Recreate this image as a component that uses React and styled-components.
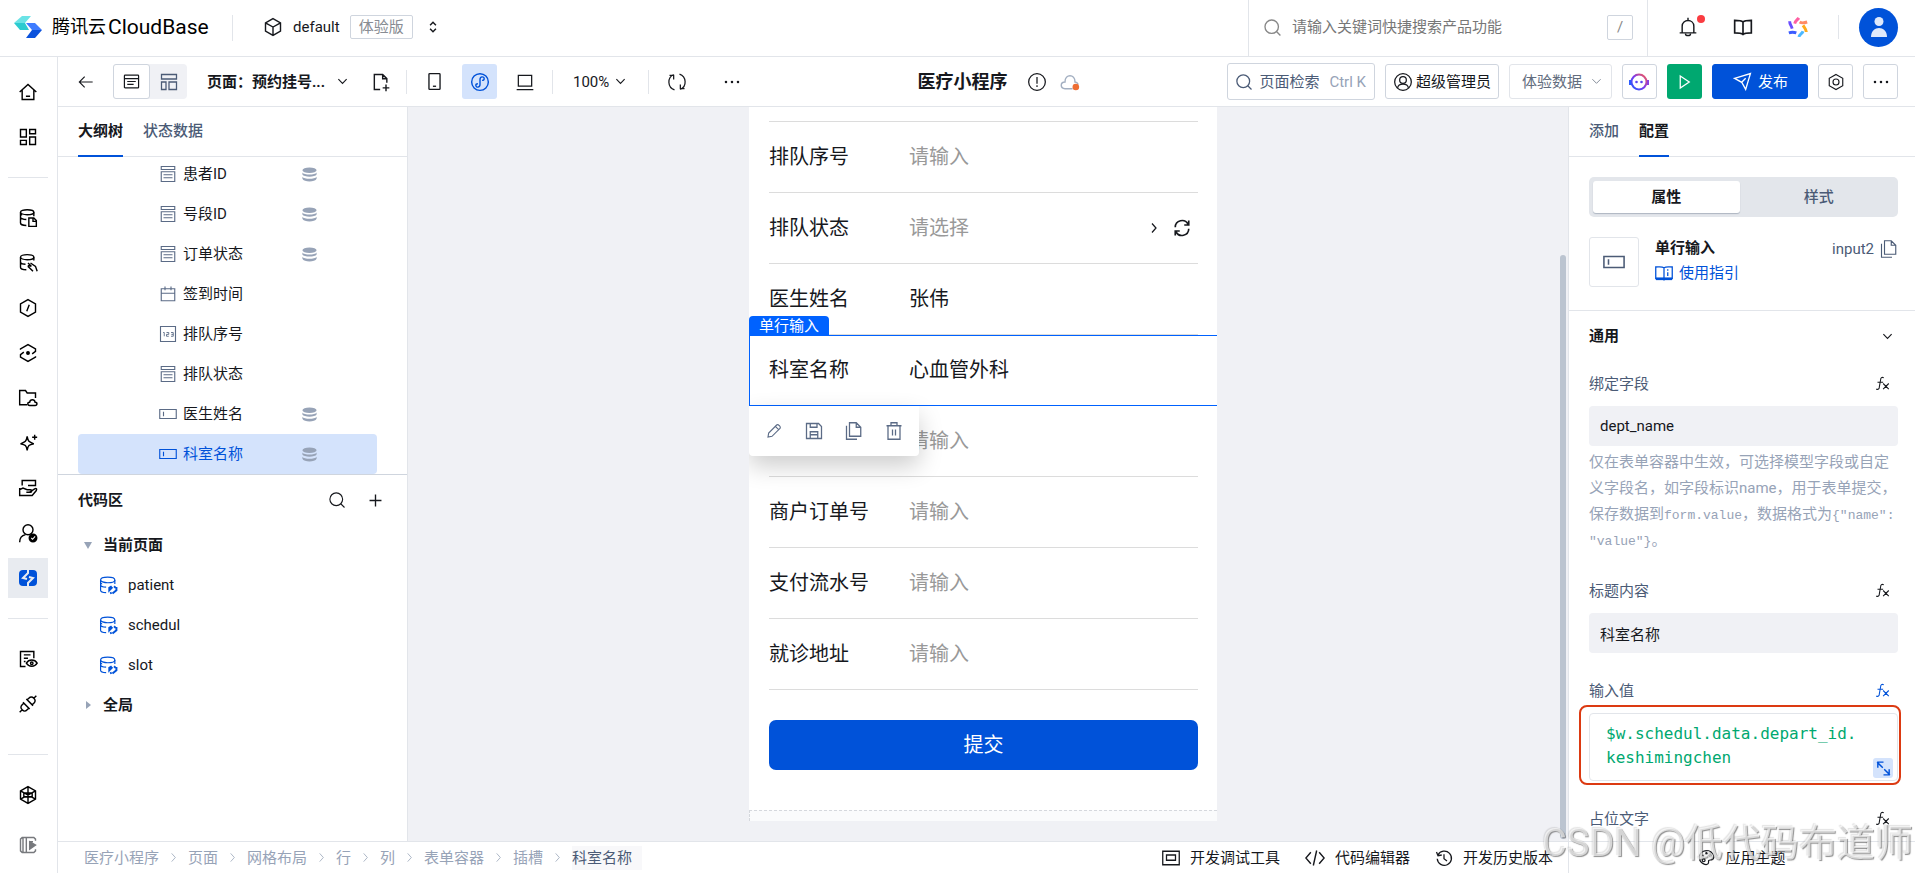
import React from "react"
import styled, { createGlobalStyle, css } from "styled-components";

const variables = {
    colorPrimary: "#0052d9",
    colorSelect: "#0062ff",
    colorPrimaryLight: "#d4e3fc",
    colorGreen: "#00a870",
    colorRed: "#dc3a12",
    colorText: "#16181d",
    colorMuted: "#4b5b76",
    colorFaint: "#97a3b7",
    colorBorder: "#e2e5ea",
    colorButtonBorder: "#cfd5de",
    colorCanvas: "#f0f1f5",
    colorWhite: "#ffffff",
    fontBase: 'Roboto, "Noto Sans CJK SC", sans-serif',
    fontCode: '"DejaVu Sans Mono", "Noto Sans CJK SC", monospace',
}

const GlobalStyle = createGlobalStyle`
    * {
        box-sizing: border-box;
    }
    body {
        margin: 0;
        font-family: ${variables.fontBase};
        font-size: 15px;
        line-height: 20px;
        color: ${variables.colorText};
        background-color: ${variables.colorWhite};
    }
    button, input, select, textarea {
        margin: 0;
        padding: 0;
        border: 0;
        outline: 0;
        font: inherit;
        color: inherit;
        background: none;
    }
    select {
        appearance: none;
    }
    ul {
        list-style: none;
        margin: 0;
        padding: 0;
    }
    h1, h2, h3, p {
        margin: 0;
        font-size: inherit;
    }
    a {
        color: inherit;
        text-decoration: none;
    }
    svg {
        display: block;
        flex: none;
    }
`

/* ---------- icons ---------- */

const Svg = styled.svg`
    width: ${props => props.$size}px;
    height: ${props => props.$size}px;
    fill: none;
    stroke: currentColor;
    stroke-width: ${props => props.$weight};
`

const icons = {
    home: <><path d="M2 12 12 3l10 9M5 10v11h14V10M9.500 17h5" /></>,
    grid: <><path d="M3 3h7v9H3zM14 3h7v5h-7zM14 12h7v9h-7zM3 16h7v5H3z" /></>,
    dbDoc: <><ellipse cx="11" cy="5" rx="8" ry="3" /><path d="M3 5v13c0 1.500 3 3 7 3M19 5v5M3 11.500c1 1.500 3 2 7 2.300M3 8h2M13 12h6l3 3v7h-9zM18 12v4h4" /></>,
    dbHand: <><ellipse cx="11" cy="5" rx="8" ry="3" /><path d="M3 5v12c0 2 3 3 7 3M19 5v4M3 11.500c1 1.500 3 2 6 2M12 12l4 4-3-1c-1 0-1 2 0 2l5 5M15 12l6 4 2 6" /></>,
    hexSlash: <><path d="M12 2l9 5v10l-9 5-9-5V7zM13.500 8l-3 8" /></>,
    hexDot: <><path d="M3 8V7l9-5 9 5v3l-4 3M21 16v1l-9 5-9-5v-3l4-3" /><circle cx="12" cy="12" r="1.500" fill="currentColor" /></>,
    folderCloud: <><path d="M11 20H2V3h7l2 3h10v6" /><path d="M14 21c-3 0-3-4 0-4 .5-4 6-4 6.500 0 3 0 3 4 0 4z" /></>,
    sparkle: <><path d="M11 4c1 6 2 7 8 9-6 1-7 2-8 8-1-6-2-7-8-8 6-2 7-3 8-9zM20 2v6M17 5h6" /></>,
    handBox: <><path d="M5 9V3h16v6h-9M2 14l4-2 5 2h4c2 0 2 3 0 3h-5M14 17l6-4c2-1 3 0 2 2l-5 6H2v-9" /></>,
    userCheck: <><circle cx="12" cy="8" r="6" /><path d="M2 23c0-5 3-8 7-9" /><circle cx="18" cy="18" r="4.500" fill="currentColor" /><path d="M16 18l1.500 1.500L20.500 16" stroke="#fff" strokeWidth="1.300" /></>,
    docEye: <><path d="M9 21H3V3h16v8M7 7h8M7 11h5M7 15h2" /><path d="M10 17c3-5 10-5 13 0-3 5-10 5-13 0z" /><circle cx="16.500" cy="17" r="1.500" /></>,
    plug: <><path d="M2 22l3-3M22 2l-3 3M5 13c-2 2-2 4 0 6s4 2 6 0l2-2-6-6zM13 5c2-2 4-2 6 0s2 4 0 6l-2 2-6-6zM6 10l8 8M10 6l8 8" /></>,
    hexWeb: <><path d="M12 2l9 5v10l-9 5-9-5V7zM12 2v20M3 7l18 10M21 7L3 17M7 9.500h10v5H7z" /></>,
    expand: <><path d="M21 7V5l-2-2H5L3 5v14l2 2h14l2-2v-2M10 3v18M6 3v18M14 8h4" /><path d="M14 8v9l7-5z" fill="currentColor" /></>,
    cube: <><path d="M12 2l9 5v10l-9 5-9-5V7zM3 7l9 5 9-5M12 12v10" /></>,
    updown: <><path d="M7 9l5-5 5 5M7 15l5 5 5-5" /></>,
    search: <><circle cx="11" cy="11" r="8.500" /><path d="M17 17l5 5" /></>,
    bell: <><path d="M2 19h20M5 19v-8c0-9 14-9 14 0v8M12 4V1M9 20c0 3 6 3 6 0" /></>,
    book: <><path d="M12 6C10 4 6 4 2 4v15c4 0 8 0 10 2 2-2 6-2 10-2V4c-4 0-8 0-10 2zM12 6v15" /></>,
    back: <><path d="M22 12H2M10 4l-8 8 8 8" /></>,
    page: <><rect x="2" y="3" width="20" height="18" rx="1" /><path d="M2 8h20M6 12h12M6 16h9" /></>,
    layout: <><path d="M2 2h20v6H2zM2 12h6v10H2zM12 12h10v10H12z" /></>,
    chevron: <><path d="M3 7l9 9 9-9" /></>,
    chevronRight: <><path d="M8 3l8 9-8 9" /></>,
    docPlus: <><path d="M11 21H4V3h10l5 5v5M14 3v5h5M18 23v-8M14 19h8" /></>,
    phone: <><rect x="5" y="2" width="14" height="20" rx="1" /><path d="M10 18h4" /></>,
    mini: <><circle cx="12" cy="12" r="10" /><path d="M12 9v6c0 4-5 4-5 1 0-1 1-2 2.500-2M12 15V9c0-4 5-4 5-1 0 1-1 2-2.500 2" /></>,
    laptop: <><path d="M4 4h16v13H4zM2 21h20" /></>,
    refresh: <><path d="M8 3a10 10 0 0 0 1 18.500M16 21A10 10 0 0 0 15 2.500M3 4h5v5M21 20h-5v-5" /></>,
    sync: <><path d="M3 11a9 9 0 0 1 17-4M21 13a9 9 0 0 1-17 4M21 2v6h-6M3 22v-6h6" /></>,
    dots: <g fill="currentColor" stroke="none"><circle cx="4" cy="12" r="1.700" /><circle cx="12" cy="12" r="1.700" /><circle cx="20" cy="12" r="1.700" /></g>,
    info: <><circle cx="12" cy="12" r="10" /><path d="M12 6v8M12 16v2" /></>,
    cloud: <><path d="M6 20c-6 0-6-8 0-8 0-10 12-10 12 0 2 0 3 1 4 3M6 20h9" /><circle cx="19" cy="18" r="4" fill="#ed6d33" stroke="none" /></>,
    user: <><circle cx="12" cy="12" r="10" /><circle cx="12" cy="9.500" r="4" /><path d="M5.500 19c1-6 12-6 13 0" /></>,
    play: <><path d="M7 4l12 8-12 8z" /></>,
    send: <><path d="M2 8l20-6-6 20-5-9zM11 13l5-5" /></>,
    gear: <><path d="M12 2l9 5v10l-9 5-9-5V7z" /><circle cx="12" cy="12" r="4" /></>,
    select: <><path d="M3 2h18v4H3zM3 9h18v13H3zM6 13h12M6 17h12" /></>,
    calendar: <><path d="M3 5h18v16H3zM3 11h18M8 2v5M16 2v5" /></>,
    number: <><path d="M2 2h20v20H2z" /><path d="M5.500 10H7v5M10 10h3v2.500h-3V15h3M16 10h3v5h-3M16.500 12.500H19" strokeWidth="1.200" /></>,
    field: <><path d="M1 6h22v12H1zM6 9v6" /></>,
    db: <g fill="currentColor" stroke="none"><ellipse cx="12" cy="6" rx="10" ry="4" /><path d="M2 9c2 4 18 4 20 0v3c-2 4-18 4-20 0zM2 15c2 4 18 4 20 0v3c-2 5-18 5-20 0z" /></g>,
    dbModel: <><ellipse cx="11" cy="5" rx="9" ry="3.500" /><path d="M2 5v13c0 2 3 3 7 3M20 5v5M2 11c0 2 3 3 7 3M2 8c0 1 1 2 2 2" /><path d="M16 13l-3 2v3l4-4M22 14v4l-5 4M19 13l2 2M14 22l2-1" strokeWidth="2.500" /></>,
    plus: <><path d="M12 1v22M1 12h22" /></>,
    pencil: <><path d="M3 21l1-6L16 3c2-2 7 3 5 5L9 20zM14 5l5 5" /></>,
    save: <><path d="M2 2h16l4 4v16H2zM7 2v5h9V2M7 22v-9h10v9M7 17h10" /></>,
    copy: <><path d="M6 1h9l6 6v12H6zM15 1v6h6M2 5v18h14" /></>,
    trash: <><path d="M2 5h20M4 5v18h16V5M8 5V1h8v4M10 10v8M14 10v8" /></>,
    guide: <><path d="M12 5C9 3 5 4 1 4v15h22V4c-4 0-8-1-11 1zM12 5v17M17 11v5M17 7v2" /><path d="M1 20h22" strokeWidth="3" /></>,
    fx: <><path d="M14 3c-3-2-5 0-5 3L7 17c0 4-2 5-5 4M4 10h9M13 12l9 9M22 12l-9 9" /></>,
    full: <><path d="M4 11V3h8M3 3l8 8M20 13v8h-8M21 21l-8-8" /></>,
    debug: <><path d="M1 3h22v18H1z" /><path d="M6 8h12v7H6z" /></>,
    code: <><path d="M7 5l-6 7 6 7M17 5l6 7-6 7M14 3l-4 18" /></>,
    history: <><path d="M4 8a9.500 9.500 0 1 1-1 5M2 4l2 5 5-1M12 7v6l4 3" /></>,
    palette: <><path d="M14 21c-2 2-12 0-12-9S12 0 18 4s5 10 2 11-6 0-5 3c0 1 0 2-1 3z" /><circle cx="7" cy="10" r="1" /><circle cx="12" cy="6" r="1" /><circle cx="17" cy="9" r="1" /><circle cx="8" cy="16" r="2" /></>,
}

const Icon = ({ name, size = 20, weight = 1.7 }) => (
    <Svg viewBox="0 0 24 24" $size={size} $weight={weight} aria-hidden="true">{icons[name]}</Svg>
)

const Logo = () => (
    <svg width="28" height="22" viewBox="0 0 28 22" aria-hidden="true">
        <path d="M0 7L8 0h9l-6 7z" fill="#6be3e6" />
        <path d="M0 7h11l4 7H6z" fill="#2ccbd0" />
        <path d="M12 7h9l7 7H18z" fill="#3f7cff" />
        <path d="M18 14h10l-7 8h-9z" fill="#0b52dc" />
    </svg>
)

const Pinwheel = () => (
    <svg width="20" height="20" viewBox="0 0 24 24" fill="none" strokeWidth="3.500" aria-hidden="true">
        <path d="M8 8c1-4 3-4 5-7" stroke="#ff5fa2" />
        <path d="M14 6c3 2 6 1 9 0" stroke="#ff8a65" />
        <path d="M18 10c2 3 4 5 4 8" stroke="#ffab1a" />
        <path d="M18 17c-1 3-4 4-5 7" stroke="#4cb8ff" />
        <path d="M10 19c-3-1-6-1-9 0" stroke="#3b5bff" />
        <path d="M5 14C4 10 2 9 2 5" stroke="#6a4dff" />
    </svg>
)

const Bot = () => (
    <svg width="20" height="18" viewBox="0 0 20 18" fill="none" aria-hidden="true">
        <defs>
            <linearGradient id="bot" x1="1" y1="0" x2="0" y2="1">
                <stop offset="0" stopColor="#ff5a4d" />
                <stop offset="0.5" stopColor="#7c3aed" />
                <stop offset="1" stopColor="#1f5bff" />
            </linearGradient>
        </defs>
        <circle cx="10" cy="9" r="7.500" stroke="url(#bot)" strokeWidth="2" />
        <path d="M1 7v5" stroke="#2b5cff" strokeWidth="2" />
        <path d="M19 7v5" stroke="#8a3fe0" strokeWidth="2" />
        <circle cx="7.500" cy="9" r="1.300" fill="#5b45f0" />
        <circle cx="12.500" cy="9" r="1.300" fill="#5b45f0" />
    </svg>
)

/* ---------- page frame ---------- */

const Page = styled.div`
    display: flex;
    flex-direction: column;
    height: 100vh;
    overflow: hidden;
`

const Header = styled.header`
    display: flex;
    align-items: center;
    flex: none;
    height: 57px;
    border-bottom: 1px solid ${variables.colorBorder};
`

const Brand = styled.a`
    display: flex;
    align-items: center;
    width: 218px;
    margin-left: 14px;
    padding-bottom: 2px;
    font-size: 18px;
    color: #000;
    & > svg {
        margin-right: 10px;
    }
    & > span {
        font-size: 21px;
        margin-left: 2px;
    }
`

const Divider = styled.span`
    width: 1px;
    height: ${props => props.$height || 24}px;
    background-color: ${variables.colorBorder};
    flex: none;
`

const EnvButton = styled.button`
    display: flex;
    align-items: center;
    gap: 10px;
    padding: 0 0 2px 30px;
    & > svg:last-child {
        margin-left: 3px;
    }
`

const EnvTag = styled.span`
    padding: 1px 8px;
    border: 1px solid ${variables.colorButtonBorder};
    border-radius: 2px;
    color: #888c93;
`

const GlobalSearch = styled.label`
    display: flex;
    align-items: center;
    width: 400px;
    height: 100%;
    margin-left: auto;
    padding: 0 14px 2px;
    border: solid ${variables.colorBorder};
    border-width: 0 1px;
    color: #888;
    & input {
        flex: 1;
        min-width: 0;
        margin-left: 10px;
        &::placeholder {
            color: #777;
        }
    }
`

const KeyHint = styled.kbd`
    width: 26px;
    border: 1px solid ${variables.colorButtonBorder};
    border-radius: 2px;
    line-height: 23px;
    font-family: inherit;
    text-align: center;
`

const HeaderTools = styled.div`
    display: flex;
    align-items: center;
    padding: 0 17px 2px 20px;
    gap: 15px;
    & > ${Divider} {
        margin: 0 5px;
    }
`

const ToolButton = styled.button`
    position: relative;
    display: flex;
    justify-content: center;
    align-items: center;
    width: 40px;
    height: 40px;
`

const AlertDot = styled.i`
    position: absolute;
    top: 8px;
    right: 3px;
    width: 8px;
    height: 8px;
    border-radius: 50%;
    background-color: #fa3c41;
`

const Avatar = styled.button`
    display: flex;
    justify-content: center;
    align-items: center;
    width: 39px;
    height: 39px;
    border-radius: 50%;
    background-color: ${variables.colorPrimary};
`

const Shell = styled.div`
    display: flex;
    flex: 1;
    min-height: 0;
`

const Sidebar = styled.nav`
    display: flex;
    flex-direction: column;
    gap: 5px;
    flex: none;
    width: 58px;
    padding: 15px 9px 0 8px;
    border-right: 1px solid ${variables.colorBorder};
    & > hr {
        width: 40px;
        height: 1px;
        margin: 15px 0;
        border: 0;
        background-color: ${variables.colorBorder};
    }
    & > hr:last-of-type {
        margin-top: 25px;
    }
`

const NavLink = styled.a`
    display: flex;
    justify-content: center;
    align-items: center;
    flex: none;
    width: 40px;
    height: 40px;
    margin-top: ${props => props.$dim ? 5 : 0}px;
    color: ${props => props.$dim ? "#77797d" : "#000"};
    background-color: ${props => props.$active ? "#e8ebf0" : "transparent"};
`

const Main = styled.main`
    display: flex;
    flex-direction: column;
    flex: 1;
    min-width: 0;
`

/* ---------- toolbar ---------- */

const Toolbar = styled.div`
    display: grid;
    grid-template-columns: 1fr auto 1fr;
    align-items: center;
    flex: none;
    height: 50px;
    border-bottom: 1px solid ${variables.colorBorder};
`

const ToolGroup = styled.div`
    display: flex;
    align-items: center;
    gap: 10px;
    padding-left: 10px;
`

const ActionGroup = styled(ToolGroup)`
    justify-content: flex-end;
    padding: 0 17px 0 0;
`

const IconButton = styled.button`
    display: flex;
    justify-content: center;
    align-items: center;
    flex: none;
    width: ${props => props.$narrow ? 30 : 35}px;
    height: 35px;
    border-radius: 3px;
    ${props => props.$active && css`
        color: ${variables.colorPrimary};
        background-color: ${variables.colorPrimaryLight};
    `}
    ${props => props.$outlined && css`
        border: 1px solid ${variables.colorButtonBorder};
    `}
    ${props => props.$solid && css`
        color: ${variables.colorWhite};
        background-color: ${variables.colorGreen};
    `}
    ${props => props.$spaced && css`
        margin-left: 10px;
    `}
`

const ViewSwitch = styled.div`
    display: flex;
    margin-right: 10px;
    border-radius: 4px;
    background-color: ${variables.colorCanvas};
    color: ${variables.colorMuted};
    & > button {
        width: 37px;
    }
    & > button:first-child {
        border: 1px solid ${variables.colorButtonBorder};
        background-color: ${variables.colorWhite};
        color: ${variables.colorText};
    }
`

const Picker = styled.label`
    display: flex;
    align-items: center;
    gap: ${props => props.$gap || 5}px;
    ${props => props.$bold && css`
        margin-right: 8px;
        font-weight: 700;
    `}
    ${props => props.$zoom && css`
        margin: 0 12px 0 10px;
    `}
    ${props => props.$boxed && css`
        height: 35px;
        padding: 0 9px 0 12px;
        border: 1px solid ${variables.colorBorder};
        border-radius: 3px;
        color: #636d7e;
    `}
`

const AppTitle = styled.div`
    display: flex;
    align-items: center;
    gap: 13px;
    padding-left: 24px;
    & > h1 {
        font-size: 18px;
        margin-right: 6px;
    }
    & > svg:last-child {
        color: #a3afc1;
    }
`

const PageSearch = styled.button`
    display: flex;
    align-items: center;
    gap: 6px;
    height: 37px;
    padding: 0 8px 0 7px;
    border: 1px solid ${variables.colorButtonBorder};
    border-radius: 3px;
    color: ${variables.colorMuted};
    & > kbd {
        margin-left: 4px;
        font-family: inherit;
        color: ${variables.colorFaint};
    }
`

const RoleButton = styled.button`
    display: flex;
    align-items: center;
    gap: 3px;
    height: 35px;
    padding: 0 7px;
    border: 1px solid ${variables.colorButtonBorder};
    border-radius: 3px;
`

const PublishButton = styled(RoleButton)`
    gap: 6px;
    padding: 0 19px 0 20px;
    border-color: ${variables.colorPrimary};
    background-color: ${variables.colorPrimary};
    color: ${variables.colorWhite};
`

/* ---------- left panel ---------- */

const Workspace = styled.div`
    display: flex;
    flex: 1;
    min-height: 0;
`

const LeftPanel = styled.aside`
    display: flex;
    flex-direction: column;
    flex: none;
    width: 350px;
    border-right: 1px solid ${variables.colorBorder};
`

const Tabs = styled.div`
    display: flex;
    flex: none;
    gap: 20px;
    height: 50px;
    padding: 0 20px;
    border-bottom: 1px solid ${variables.colorBorder};
`

const Tab = styled.button`
    height: 50px;
    border-bottom: 2px solid ${props => props.$active ? variables.colorPrimary : "transparent"};
    font-weight: ${props => props.$active ? 700 : 500};
    color: ${props => props.$active ? variables.colorText : variables.colorMuted};
`

const Tree = styled.ul`
    display: flex;
    flex-direction: column;
    justify-content: flex-end;
    flex: none;
    height: 317px;
    overflow: hidden;
`

const TreeRow = styled.li`
    flex: none;
    margin: 0 30px 0 20px;
    border-radius: 4px;
    ${props => props.$active && css`
        background-color: ${variables.colorPrimaryLight};
    `}
    & > button {
        display: flex;
        align-items: center;
        gap: 6px;
        width: 100%;
        height: 40px;
        padding: 0 59px 0 81px;
        color: ${props => props.$active ? variables.colorPrimary : variables.colorText};
    }
    & svg:first-child {
        color: ${props => props.$active ? variables.colorPrimary : "#5b6b86"};
    }
    & span + svg {
        margin-left: auto;
        color: ${variables.colorFaint};
    }
`

const CodeArea = styled.section`
    flex: 1;
    border-top: 1px solid ${variables.colorButtonBorder};
`

const CodeHeader = styled.div`
    display: flex;
    align-items: center;
    height: 50px;
    padding: 0 13px 0 20px;
    & > h2 {
        margin-right: auto;
    }
    & > button {
        width: 25px;
        margin-left: 16px;
    }
`

const CodeRow = styled.button`
    display: flex;
    align-items: center;
    gap: 10px;
    width: 100%;
    height: 40px;
    padding-left: ${props => props.$group ? 25 : 41}px;
    font-weight: ${props => props.$group ? 700 : 400};
    & > svg {
        color: ${props => props.$group ? variables.colorFaint : variables.colorPrimary};
    }
`

const Triangle = ({ open }) => (
    <svg width="10" height="10" viewBox="0 0 10 10" fill="currentColor" aria-hidden="true">
        <path d={open ? "M1 2h8L5 9z" : "M3 1l5 4-5 4z"} />
    </svg>
)

/* ---------- canvas ---------- */

const Canvas = styled.section`
    position: relative;
    display: flex;
    flex-direction: column;
    justify-content: flex-end;
    align-items: center;
    flex: 1;
    min-width: 0;
    padding: 0 10px 20px 0;
    overflow: hidden;
    background-color: ${variables.colorCanvas};
`

const ScrollThumb = styled.div`
    position: absolute;
    right: 2px;
    top: 148px;
    bottom: 2px;
    width: 6px;
    border-radius: 3px;
    background-color: #bbc4d0;
`

const Phone = styled.form`
    display: flex;
    flex-direction: column;
    justify-content: flex-end;
    width: 468px;
    height: 100%;
    overflow: hidden;
    background-color: ${variables.colorWhite};
`

const FormRows = styled.div`
    flex: none;
    margin: 0 19px 0 20px;
    border-top: 1px solid #dcdcdc;
`

const FormRow = styled.div`
    position: relative;
    display: flex;
    align-items: center;
    height: 71px;
    border-bottom: 1px solid #dcdcdc;
    font-size: 20px;
    line-height: 28px;
    & > label {
        width: 140px;
    }
    & > input, & > select {
        flex: 1;
        min-width: 0;
        height: 28px;
    }
    & > select {
        color: #999;
    }
    & > input::placeholder {
        color: #999;
    }
    & > svg {
        margin-right: 13px;
    }
    & > svg:last-child {
        margin-right: 7px;
    }
`

const Selection = styled.div`
    position: absolute;
    inset: 0 -19px -1px -20px;
    border: solid ${variables.colorSelect};
    border-width: 1px 0 1px 1px;
    pointer-events: none;
    & > span {
        position: absolute;
        left: -1px;
        bottom: 100%;
        width: 80px;
        border-radius: 4px 4px 0 0;
        background-color: ${variables.colorSelect};
        color: ${variables.colorWhite};
        font-size: 15px;
        line-height: 20px;
        text-align: center;
    }
`

const FloatBar = styled.div`
    position: absolute;
    z-index: 1;
    left: -20px;
    top: 71px;
    display: flex;
    width: 170px;
    height: 50px;
    padding: 0 5px;
    border-radius: 0 0 4px 4px;
    background-color: ${variables.colorWhite};
    box-shadow: 0 10px 25px rgba(0, 0, 0, 0.2);
    color: #5b6b86;
    & > button {
        display: flex;
        justify-content: center;
        align-items: center;
        width: 40px;
    }
`

const SubmitButton = styled.button`
    flex: none;
    height: 50px;
    margin: 30px 19px 40px 20px;
    border-radius: 7px;
    background-color: ${variables.colorPrimary};
    color: ${variables.colorWhite};
    font-size: 20px;
`

const DropSlot = styled.div`
    flex: none;
    height: 11px;
    border: dashed #d5d8dd;
    border-width: 1px 0 0 1px;
    background-color: #fafbfc;
`

/* ---------- right panel ---------- */

const RightPanel = styled.aside`
    display: flex;
    flex-direction: column;
    flex: none;
    width: 347px;
    overflow: hidden;
    border-left: 1px solid ${variables.colorBorder};
    & > * {
        flex: none;
    }
`

const Segmented = styled.div`
    display: grid;
    grid-template-columns: 1fr 1fr;
    height: 40px;
    margin: 20px 17px 20px 20px;
    padding: 4px;
    border-radius: 5px;
    background-color: #e3e6eb;
    & > button {
        border-radius: 3px;
        font-weight: 500;
        color: ${variables.colorMuted};
    }
    & > button:first-child {
        margin-right: 4px;
        background-color: ${variables.colorWhite};
        box-shadow: 0 1px 1px rgba(75, 91, 118, 0.35);
        font-weight: 700;
        color: ${variables.colorText};
    }
`

const Summary = styled.div`
    display: flex;
    gap: 16px;
    padding: 0 17px 23px 20px;
    border-bottom: 1px solid ${variables.colorBorder};
`

const Thumb = styled.div`
    display: flex;
    justify-content: center;
    align-items: center;
    width: 50px;
    height: 50px;
    border: 1px solid ${variables.colorBorder};
    border-radius: 3px;
    color: ${variables.colorMuted};
`

const SummaryText = styled.div`
    display: flex;
    flex-direction: column;
    gap: 5px;
    flex: 1;
    padding-top: 1px;
    & > a {
        display: flex;
        gap: 6px;
        align-items: center;
        color: ${variables.colorPrimary};
    }
`

const SummaryId = styled.div`
    display: flex;
    gap: 6px;
    height: 24px;
    align-items: center;
    color: ${variables.colorMuted};
`

const Fields = styled.section`
    padding: 0 17px 0 20px;
    & > h3 {
        display: flex;
        justify-content: space-between;
        align-items: center;
        height: 50px;
        padding-right: 5px;
    }
`

const Field = styled.div`
    display: flex;
    flex-direction: column;
    margin-bottom: 15px;
    & > input {
        height: 40px;
        padding: 0 11px;
        border-radius: 4px;
        background-color: ${variables.colorCanvas};
    }
    & > p {
        margin-top: 3px;
        line-height: 26px;
        color: ${variables.colorFaint};
    }
    & code {
        font-family: "Liberation Mono", monospace;
        font-size: 13px;
        line-height: 13px;
    }
`

const FieldHead = styled.div`
    display: flex;
    justify-content: space-between;
    align-items: center;
    height: 45px;
    padding-right: 8px;
    color: ${variables.colorMuted};
    & > button {
        color: ${props => props.$bound ? variables.colorPrimary : variables.colorText};
    }
`

const CodeBox = styled.div`
    position: relative;
    height: 68px;
    border: 1px solid ${variables.colorBorder};
    border-radius: 4px;
    & > textarea {
        display: block;
        width: 100%;
        height: 100%;
        padding: 8px 0 0 16px;
        resize: none;
        overflow: hidden;
        font-family: ${variables.fontCode};
        font-size: 16px;
        line-height: 24px;
        color: ${variables.colorGreen};
    }
    & > button {
        position: absolute;
        right: 4px;
        bottom: 2px;
        display: flex;
        justify-content: center;
        align-items: center;
        width: 20px;
        height: 20px;
        border-radius: 3px;
        background-color: ${variables.colorPrimaryLight};
        color: ${variables.colorPrimary};
    }
`

const Marker = styled.div`
    position: absolute;
    inset: -9px -4px -5px -11px;
    border: 2px solid ${variables.colorRed};
    border-radius: 8px;
    pointer-events: none;
`

/* ---------- footer ---------- */

const Footer = styled.footer`
    display: flex;
    flex: none;
    height: 32px;
    border-top: 1px solid ${variables.colorBorder};
`

const Crumbs = styled.ul`
    display: flex;
    align-items: center;
    padding-left: 26px;
    & > li {
        display: flex;
        align-items: center;
        color: ${variables.colorFaint};
    }
    & svg {
        margin: 0 9px;
        color: ${variables.colorFaint};
    }
    & > li:last-child {
        height: 24px;
        padding-right: 10px;
        background-color: #f8f8fa;
        color: ${variables.colorMuted};
    }
`

const FooterTools = styled.div`
    display: flex;
    align-items: center;
    gap: 25px;
    margin-left: auto;
    padding-right: 15px;
`

const FooterButton = styled.button`
    display: flex;
    align-items: center;
    gap: 10px;
`

const ThemeArea = styled.div`
    display: flex;
    justify-content: center;
    width: 347px;
    border-left: 1px solid ${variables.colorBorder};
`

const Watermark = styled.div`
    position: fixed;
    right: 2px;
    bottom: 8px;
    font-size: 38px;
    line-height: 44px;
    white-space: nowrap;
    color: rgba(255, 255, 255, 0.65);
    text-shadow: 1px 1px 1px rgba(70, 70, 70, 0.6), -1px -1px 1px rgba(120, 120, 120, 0.2);
    pointer-events: none;
`

const navGroups = [
    [["home", "首页"], ["grid", "概览"]],
    [
        ["dbDoc", "文档型数据库"], ["dbHand", "数据模型"], ["hexSlash", "云函数"], ["hexDot", "云托管"],
        ["folderCloud", "云存储"], ["sparkle", "AI"], ["handBox", "静态托管"], ["userCheck", "身份认证"], ["lowcode", "云开发平台"],
    ],
    [["docEye", "日志监控"], ["plug", "连接器"]],
    [["hexWeb", "扩展"], ["expand", "展开"]],
]

const treeItems = [
    { label: "患者ID", icon: "select", bound: true },
    { label: "号段ID", icon: "select", bound: true },
    { label: "订单状态", icon: "select", bound: true },
    { label: "签到时间", icon: "calendar" },
    { label: "排队序号", icon: "number" },
    { label: "排队状态", icon: "select" },
    { label: "医生姓名", icon: "field", bound: true },
    { label: "科室名称", icon: "field", bound: true, active: true },
]

const formItems = [
    { id: "queueNo", label: "排队序号" },
    { id: "queueState", label: "排队状态", type: "select" },
    { id: "doctor", label: "医生姓名", value: "张伟" },
    { id: "dept", label: "科室名称", value: "心血管外科", selected: true },
    { id: "paid", label: "" },
    { id: "merchantNo", label: "商户订单号" },
    { id: "payNo", label: "支付流水号" },
    { id: "address", label: "就诊地址" },
]

const crumbs = ["医疗小程序", "页面", "网格布局", "行", "列", "表单容器", "插槽", "科室名称"]

const LowcodeMark = () => (
    <svg width="20" height="18" viewBox="0 0 20 18" aria-hidden="true">
        <path d="M5 1h10q4 0 4 4v8q0 4-4 4H5q-4 0-4-4V5q0-4 4-4z" fill={variables.colorPrimary} />
        <path d="M10 0v4L5 9l4 1M10 18v-4l5-5-4-1" fill="none" stroke="#e8ebf0" strokeWidth="2" />
    </svg>
)

const AppHeader = () => (
    <Header>
        <Brand href="#">
            <Logo />
            腾讯云<span>CloudBase</span>
        </Brand>
        <Divider $height={26} />
        <EnvButton type="button">
            <Icon name="cube" />
            default
            <EnvTag>体验版</EnvTag>
            <Icon name="updown" size={14} weight={2.500} />
        </EnvButton>
        <GlobalSearch>
            <Icon name="search" size={19} />
            <input type="search" aria-label="搜索" placeholder="请输入关键词快捷搜索产品功能" />
            <KeyHint>/</KeyHint>
        </GlobalSearch>
        <HeaderTools>
            <ToolButton type="button" aria-label="消息"><Icon name="bell" /><AlertDot /></ToolButton>
            <ToolButton type="button" aria-label="文档"><Icon name="book" weight={2} /></ToolButton>
            <ToolButton type="button" aria-label="助手"><Pinwheel /></ToolButton>
            <Divider />
            <Avatar type="button" aria-label="账号">
                <svg width="16" height="20" viewBox="0 0 16 20" fill="#dfe9fb" aria-hidden="true">
                    <circle cx="8" cy="4.500" r="4.500" />
                    <path d="M0 20c0-12 16-12 16 0z" />
                </svg>
            </Avatar>
        </HeaderTools>
    </Header>
)

const SideNav = () => (
    <Sidebar>
        {navGroups.map((group, index) => (
            <React.Fragment key={index}>
                {index > 0 && <hr />}
                {group.map(([icon, title]) => (
                    <NavLink key={icon} href="#" aria-label={title} $active={icon === "lowcode"} $dim={icon === "expand"}>
                        {icon === "lowcode" ? <LowcodeMark /> : <Icon name={icon} />}
                    </NavLink>
                ))}
            </React.Fragment>
        ))}
    </Sidebar>
)

const EditorToolbar = () => (
    <Toolbar>
        <ToolGroup>
            <IconButton type="button" aria-label="返回"><Icon name="back" size={16} /></IconButton>
            <ViewSwitch>
                <IconButton type="button" aria-label="页面视图"><Icon name="page" size={17} /></IconButton>
                <IconButton type="button" aria-label="布局视图"><Icon name="layout" size={18} /></IconButton>
            </ViewSwitch>
            <Picker $bold $gap={11}>
                <select aria-label="页面"><option>页面：预约挂号...</option></select>
                <Icon name="chevron" size={11} weight={2.500} />
            </Picker>
            <IconButton type="button" aria-label="新建页面" $narrow><Icon name="docPlus" size={20} /></IconButton>
            <Divider />
            <IconButton type="button" aria-label="手机"><Icon name="phone" size={19} /></IconButton>
            <IconButton type="button" aria-label="小程序" $active><Icon name="mini" size={20} /></IconButton>
            <IconButton type="button" aria-label="电脑"><Icon name="laptop" size={20} weight={1.500} /></IconButton>
            <Divider />
            <Picker $zoom $gap={5}>
                <select aria-label="缩放"><option>100%</option></select>
                <Icon name="chevron" size={11} weight={2.500} />
            </Picker>
            <Divider />
            <IconButton type="button" aria-label="刷新"><Icon name="refresh" size={20} weight={1.500} /></IconButton>
            <IconButton type="button" aria-label="更多" $spaced><Icon name="dots" size={18} /></IconButton>
        </ToolGroup>
        <AppTitle>
            <h1>医疗小程序</h1>
            <Icon name="info" size={20} weight={1.500} />
            <Icon name="cloud" size={20} />
        </AppTitle>
        <ActionGroup>
            <PageSearch type="button"><Icon name="search" size={18} />页面检索<kbd>Ctrl K</kbd></PageSearch>
            <RoleButton type="button"><Icon name="user" size={20} weight={1.500} />超级管理员</RoleButton>
            <Picker $boxed $gap={8}>
                <select aria-label="数据环境"><option>体验数据</option></select>
                <Icon name="chevron" size={11} />
            </Picker>
            <IconButton type="button" aria-label="AI" $outlined><Bot /></IconButton>
            <IconButton type="button" aria-label="预览" $solid><Icon name="play" size={18} /></IconButton>
            <PublishButton type="button"><Icon name="send" size={19} />发布</PublishButton>
            <IconButton type="button" aria-label="设置" $outlined><Icon name="gear" size={18} weight={1.500} /></IconButton>
            <IconButton type="button" aria-label="更多操作" $outlined><Icon name="dots" size={18} /></IconButton>
        </ActionGroup>
    </Toolbar>
)

const OutlinePanel = () => (
    <LeftPanel>
        <Tabs>
            <Tab type="button" $active>大纲树</Tab>
            <Tab type="button">状态数据</Tab>
        </Tabs>
        <Tree>
            {treeItems.map(item => (
                <TreeRow key={item.label} $active={item.active}>
                    <button type="button">
                        <Icon name={item.icon} size={18} weight={1.500} />
                        <span>{item.label}</span>
                        {item.bound && <Icon name="db" size={17} />}
                    </button>
                </TreeRow>
            ))}
        </Tree>
        <CodeArea>
            <CodeHeader>
                <h2>代码区</h2>
                <button type="button" aria-label="搜索代码"><Icon name="search" size={18} weight={1.500} /></button>
                <button type="button" aria-label="新建"><Icon name="plus" size={13} weight={2.500} /></button>
            </CodeHeader>
            <CodeRow type="button" $group><Triangle open />当前页面</CodeRow>
            {["patient", "schedul", "slot"].map(name => (
                <CodeRow key={name} type="button"><Icon name="dbModel" size={19} weight={1.500} />{name}</CodeRow>
            ))}
            <CodeRow type="button" $group><Triangle />全局</CodeRow>
        </CodeArea>
    </LeftPanel>
)

const DesignCanvas = () => (
    <Canvas>
        <Phone>
            <FormRows>
                {formItems.map(item => (
                    <FormRow key={item.id}>
                        <label htmlFor={item.id}>{item.label}</label>
                        {item.type === "select"
                            ? <>
                                <select id={item.id}><option>请选择</option></select>
                                <Icon name="chevronRight" size={12} weight={2.500} />
                                <Icon name="sync" size={18} weight={2.200} />
                            </>
                            : <input id={item.id} placeholder="请输入" defaultValue={item.value} />}
                        {item.selected && <>
                            <Selection><span>单行输入</span></Selection>
                            <FloatBar>
                                {["pencil", "save", "copy", "trash"].map(name => (
                                    <button key={name} type="button" aria-label={name}>
                                        <Icon name={name} size={name === "pencil" ? 16 : 18} weight={1.700} />
                                    </button>
                                ))}
                            </FloatBar>
                        </>}
                    </FormRow>
                ))}
            </FormRows>
            <SubmitButton type="button">提交</SubmitButton>
            <DropSlot />
        </Phone>
        <ScrollThumb />
    </Canvas>
)

const PropHead = ({ id, label, bound }) => (
    <FieldHead $bound={bound}>
        <label htmlFor={id}>{label}</label>
        <button type="button" aria-label="表达式"><Icon name="fx" size={15} /></button>
    </FieldHead>
)

const ConfigPanel = () => (
    <RightPanel>
        <Tabs>
            <Tab type="button">添加</Tab>
            <Tab type="button" $active>配置</Tab>
        </Tabs>
        <Segmented>
            <button type="button">属性</button>
            <button type="button">样式</button>
        </Segmented>
        <Summary>
            <Thumb><Icon name="field" size={22} /></Thumb>
            <SummaryText>
                <h2>单行输入</h2>
                <a href="#"><Icon name="guide" size={18} />使用指引</a>
            </SummaryText>
            <SummaryId>input2<Icon name="copy" size={18} weight={1.500} /></SummaryId>
        </Summary>
        <Fields>
            <h3>通用<Icon name="chevron" size={11} weight={2.500} /></h3>
            <Field>
                <PropHead id="bindField" label="绑定字段" />
                <input id="bindField" defaultValue="dept_name" />
                <p>
                    仅在表单容器中生效，可选择模型字段或自定义字段名，如字段标识name，用于表单提交，保存数据到<code>form.value</code>，数据格式为<code>{'{"name": "value"}'}</code>。
                </p>
            </Field>
            <Field>
                <PropHead id="titleText" label="标题内容" />
                <input id="titleText" defaultValue="科室名称" />
            </Field>
            <Field>
                <PropHead id="inputValue" label="输入值" bound />
                <CodeBox>
                    <textarea id="inputValue" spellCheck="false" defaultValue={"$w.schedul.data.depart_id.\nkeshimingchen"} />
                    <button type="button" aria-label="展开编辑"><Icon name="full" size={17} weight={2} /></button>
                    <Marker />
                </CodeBox>
            </Field>
            <PropHead label="占位文字" />
        </Fields>
    </RightPanel>
)

const StatusBar = () => (
    <Footer>
        <Crumbs>
            {crumbs.map((name, index) => (
                <li key={name}>
                    {name}
                    {index < crumbs.length - 1 && <Icon name="chevronRight" size={11} />}
                </li>
            ))}
        </Crumbs>
        <FooterTools>
            <FooterButton type="button"><Icon name="debug" size={18} />开发调试工具</FooterButton>
            <FooterButton type="button"><Icon name="code" size={20} />代码编辑器</FooterButton>
            <FooterButton type="button"><Icon name="history" size={18} />开发历史版本</FooterButton>
        </FooterTools>
        <ThemeArea>
            <FooterButton type="button"><Icon name="palette" size={17} />应用主题</FooterButton>
        </ThemeArea>
    </Footer>
)

const App = () => (
    <Page>
        <GlobalStyle />
        <AppHeader />
        <Shell>
            <SideNav />
            <Main>
                <EditorToolbar />
                <Workspace>
                    <OutlinePanel />
                    <DesignCanvas />
                    <ConfigPanel />
                </Workspace>
                <StatusBar />
            </Main>
        </Shell>
        <Watermark>CSDN @低代码布道师</Watermark>
    </Page>
)

export default App;
